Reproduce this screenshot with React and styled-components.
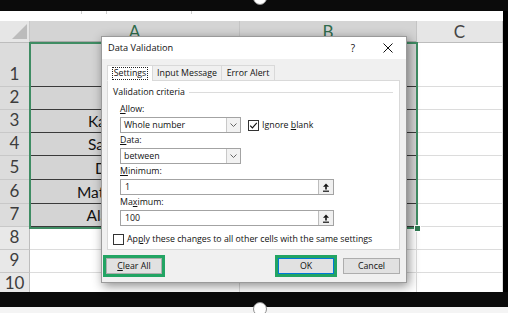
import React from "react";
import styled, { createGlobalStyle } from "styled-components";

const GlobalStyle = createGlobalStyle`
  html, body {
    margin: 0;
    padding: 0;
    background: #000;
  }
  body {
    width: 508px;
    height: 313px;
    overflow: hidden;
    font-family: "Open Sans", "Noto Sans", sans-serif;
  }
`;

const columns = [
  { key: "A", selected: true },
  { key: "B", selected: true },
  { key: "C", selected: false },
];

// row number, height, text in column A
const rows = [
  { n: 1, h: 44, text: "" },
  { n: 2, h: 23, text: "" },
  { n: 3, h: 23, text: "Kate Williams" },
  { n: 4, h: 23, text: "Sam Peterson" },
  { n: 5, h: 24, text: "Daniel Ross" },
  { n: 6, h: 24, text: "Matthew Hartley" },
  { n: 7, h: 23, text: "Alan Johnston" },
  { n: 8, h: 23, text: "" },
  { n: 9, h: 23, text: "" },
  { n: 10, h: 23, text: "" },
];

const Chevron = () => (
  <svg width="7" height="4" viewBox="0 0 7 4">
    <polyline points="0.5,0.5 3.5,3.5 6.5,0.5" fill="none" stroke="#666" strokeWidth="1" />
  </svg>
);

const RangeIcon = () => (
  <svg width="8" height="9" viewBox="0 0 8 9">
    <polygon points="4,0.5 1,3.8 7,3.8" fill="#111" />
    <rect x="3.2" y="3.5" width="1.6" height="3" fill="#111" />
    <rect x="1" y="7.6" width="6" height="1.2" fill="#111" />
  </svg>
);

const CloseIcon = () => (
  <svg width="10" height="10" viewBox="0 0 10 10">
    <path d="M0.5 0.5 L9.5 9.5 M9.5 0.5 L0.5 9.5" stroke="#111" strokeWidth="1" />
  </svg>
);

const Tick = () => (
  <svg width="9" height="9" viewBox="0 0 9 9">
    <polyline points="1.2,4.6 3.4,6.9 7.8,1.8" fill="none" stroke="#111" strokeWidth="1.1" />
  </svg>
);

const App = () => {
  return (
    <>
      <GlobalStyle />
      <Frame>
        <TopBar />
        <Sheet>
          <FormulaStrip>
            <StripMark $w={82} />
            <StripMark $w={25} />
            <StripMark $w={85} />
          </FormulaStrip>
          <Grid $rows={rows.map((r) => r.h + "px").join(" ")}>
            <Corner>
              <CornerTriangle />
            </Corner>
            {columns.map((c) => (
              <ColHead key={c.key} $selected={c.selected}>
                {c.key}
              </ColHead>
            ))}
            {rows.map((r) => (
              <React.Fragment key={r.n}>
                <RowHead $selected={r.n <= 7}>{r.n}</RowHead>
                <Cell $selected={r.n <= 7}>{r.text}</Cell>
                <Cell $selected={r.n <= 7} />
                <Cell />
              </React.Fragment>
            ))}
            <Selection />
            <FillHandle />
          </Grid>
        </Sheet>
        <BottomBar />
        <BottomStrip />
        <Handle $top={-9} />
        <Handle $top={302} />

        <Dialog>
          <TitleBar>
            <Title>Data Validation</Title>
            <TitleButtons>
              <TitleButton>?</TitleButton>
              <TitleButton>
                <CloseIcon />
              </TitleButton>
            </TitleButtons>
          </TitleBar>

          <Tabs>
            <Tab $w={46} $active>
              <FocusText>Settings</FocusText>
            </Tab>
            <Tab $w={70}>Input Message</Tab>
            <Tab $w={54}>Error Alert</Tab>
          </Tabs>

          <Panel>
            <Legend>
              <span>Validation criteria</span>
              <LegendLine />
            </Legend>

            <Fields>
              <Label>
                <u>A</u>llow:
              </Label>
              <FieldRow>
                <Select $w={121}>
                  <span>Whole number</span>
                  <DropButton>
                    <Chevron />
                  </DropButton>
                </Select>
                <CheckRow $ml={7}>
                  <CheckBox>
                    <Tick />
                  </CheckBox>
                  <span>
                    Ignore <u>b</u>lank
                  </span>
                </CheckRow>
              </FieldRow>

              <Label>
                <u>D</u>ata:
              </Label>
              <FieldRow>
                <Select $w={121}>
                  <span>between</span>
                  <DropButton>
                    <Chevron />
                  </DropButton>
                </Select>
              </FieldRow>

              <Label>
                <u>M</u>inimum:
              </Label>
              <FieldRow>
                <Input>
                  <span>1</span>
                  <RangeButton>
                    <RangeIcon />
                  </RangeButton>
                </Input>
              </FieldRow>

              <Label>
                Ma<u>x</u>imum:
              </Label>
              <FieldRow>
                <Input>
                  <span>100</span>
                  <RangeButton>
                    <RangeIcon />
                  </RangeButton>
                </Input>
              </FieldRow>
            </Fields>

            <ApplyRow>
              <CheckRow>
                <CheckBox />
                <span>
                  Ap<u>p</u>ly these changes to all other cells with the same settings
                </span>
              </CheckRow>
            </ApplyRow>
          </Panel>

          <ButtonBar>
            <Highlight>
              <Button $w={56}>
                <u>C</u>lear All
              </Button>
            </Highlight>
            <RightButtons>
              <Highlight>
                <Button $w={56} $default>
                  OK
                </Button>
              </Highlight>
              <Button $w={57}>Cancel</Button>
            </RightButtons>
          </ButtonBar>
        </Dialog>
      </Frame>
    </>
  );
};

const Frame = styled.div`
  position: relative;
  width: 508px;
  height: 313px;
  background: #000;
  display: flex;
  flex-direction: column;
  overflow: hidden;
  & > * {
    flex-shrink: 0;
  }
`;

const TopBar = styled.div`
  height: 11px;
  background: #0b0b0b;
`;

const BottomBar = styled.div`
  height: 15px;
  background: #0b0b0b;
`;

const BottomStrip = styled.div`
  height: 6px;
  background: #f4f4f4;
`;

const Handle = styled.div`
  position: absolute;
  left: 253px;
  top: ${(p) => p.$top}px;
  width: 12px;
  height: 12px;
  border-radius: 50%;
  background: #fff;
  border: 1.5px solid #8c8c8c;
`;

const Sheet = styled.div`
  width: 503px;
  height: 281px;
  background: #fff;
  display: flex;
  flex-direction: column;
  overflow: hidden;
  font-family: Lato, "Liberation Sans", sans-serif;
  & > * {
    flex-shrink: 0;
  }
`;

const FormulaStrip = styled.div`
  height: 10px;
  display: flex;
  align-items: flex-start;
  background: #fff;
`;

const StripMark = styled.div`
  width: ${(p) => p.$w}px;
  height: 3px;
  border-right: 1px solid #cfcfcf;
  box-sizing: border-box;
`;

const Grid = styled.div`
  position: relative;
  display: grid;
  grid-template-columns: 30px 210px 177px 86px;
  grid-template-rows: 22px ${(p) => p.$rows};
`;

const Corner = styled.div`
  position: relative;
  background: #e6e6e6;
  border-right: 1px solid #c8c8c8;
  border-bottom: 1px solid #bdbdbd;
`;

const CornerTriangle = styled.div`
  position: absolute;
  right: 2px;
  bottom: 3px;
  width: 15px;
  height: 15px;
  background: #bcbcbc;
  clip-path: polygon(100% 0, 100% 100%, 0 100%);
`;

const ColHead = styled.div`
  display: flex;
  align-items: center;
  justify-content: center;
  font-size: 17px;
  background: ${(p) => (p.$selected ? "#d4d4d4" : "#e6e6e6")};
  color: ${(p) => (p.$selected ? "#2f6b4c" : "#444")};
  border-right: 1px solid #c4c4c4;
  border-bottom: ${(p) => (p.$selected ? "2px solid #a9a9a9" : "1px solid #bdbdbd")};
  box-sizing: border-box;
`;

const RowHead = styled.div`
  display: flex;
  align-items: flex-end;
  justify-content: center;
  padding-bottom: 2px;
  box-sizing: border-box;
  font-size: 17px;
  color: #3d3d3d;
  background: ${(p) => (p.$selected ? "#dcdcdc" : "#e8e8e8")};
  border-right: 1px solid #bdbdbd;
  border-bottom: 1px solid #c8c8c8;
`;

const Cell = styled.div`
  display: flex;
  align-items: flex-end;
  justify-content: center;
  padding-bottom: 2px;
  box-sizing: border-box;
  font-size: 15.5px;
  color: #111;
  white-space: nowrap;
  overflow: hidden;
  background: ${(p) => (p.$selected ? "#d4d4d4" : "#fff")};
  border-right: 1px solid ${(p) => (p.$selected ? "#8c8c8c" : "#dcdcdc")};
  border-bottom: 1px solid ${(p) => (p.$selected ? "#3a3a3a" : "#dcdcdc")};
`;

const Selection = styled.div`
  position: absolute;
  left: 29px;
  top: 21px;
  width: 389px;
  height: 187px;
  border: 2px solid #3f8c63;
  box-sizing: border-box;
  pointer-events: none;
`;

const FillHandle = styled.div`
  position: absolute;
  left: 414px;
  top: 204px;
  width: 5px;
  height: 5px;
  background: #2f7a52;
  border: 1px solid #fff;
`;

/* dialog */

const Dialog = styled.div`
  position: absolute;
  left: 101px;
  top: 36px;
  width: 306px;
  height: 247px;
  box-sizing: border-box;
  background: #f0f0f0;
  border: 1px solid #9a9a9a;
  box-shadow: 2px 3px 10px rgba(0, 0, 0, 0.45);
  display: flex;
  flex-direction: column;
  font-family: "Open Sans", "Noto Sans", sans-serif;
  font-size: 8.8px;
  line-height: 1.2;
  color: #111;
  & > * {
    flex-shrink: 0;
  }
`;

const TitleBar = styled.div`
  height: 22px;
  display: flex;
  align-items: center;
  justify-content: space-between;
  padding-left: 6px;
  background: #fff;
`;

const Title = styled.div`
  font-size: 9.2px;
  color: #111;
`;

const TitleButtons = styled.div`
  display: flex;
  gap: 5px;
  padding-right: 3px;
`;

const TitleButton = styled.div`
  width: 30px;
  height: 20px;
  display: flex;
  align-items: center;
  justify-content: center;
  font-size: 10px;
`;

const Tabs = styled.div`
  display: flex;
  margin: 6px 0 0 6px;
  height: 16px;
  position: relative;
  z-index: 1;
`;

const Tab = styled.div`
  width: ${(p) => p.$w}px;
  box-sizing: border-box;
  display: flex;
  align-items: center;
  justify-content: center;
  border: 1px solid #d9d9d9;
  border-bottom: ${(p) => (p.$active ? "1px solid #fff" : "1px solid #d9d9d9")};
  margin-left: -1px;
  background: ${(p) => (p.$active ? "#fff" : "#f0f0f0")};
  white-space: nowrap;
`;

const FocusText = styled.span`
  border: 1px dotted #222;
  padding: 0 1px;
  line-height: 11px;
`;

const Panel = styled.div`
  margin: -1px 6px 0 5px;
  height: 170px;
  box-sizing: border-box;
  background: #fff;
  border: 1px solid #d9d9d9;
  padding: 5px 6px 0 5px;
  display: flex;
  flex-direction: column;
`;

const Legend = styled.div`
  display: flex;
  align-items: center;
  height: 12px;
  gap: 4px;
  white-space: nowrap;
`;

const LegendLine = styled.div`
  flex: 1;
  height: 1px;
  background: #dcdcdc;
`;

const Fields = styled.div`
  display: flex;
  flex-direction: column;
  padding-left: 7px;
  margin-top: 4px;
`;

const Label = styled.div`
  height: 15px;
  display: flex;
  align-items: center;
  white-space: nowrap;
`;

const FieldRow = styled.div`
  display: flex;
  align-items: center;
  height: 16px;
`;

const Select = styled.div`
  width: ${(p) => p.$w}px;
  height: 16px;
  box-sizing: border-box;
  border: 1px solid #a3a3a3;
  background: #fff;
  display: flex;
  align-items: center;
  justify-content: space-between;
  padding-left: 3px;
`;

const DropButton = styled.div`
  width: 13px;
  height: 100%;
  border-left: 1px solid #c9c9c9;
  background: #f2f2f2;
  display: flex;
  align-items: center;
  justify-content: center;
`;

const Input = styled(Select)`
  width: 214px;
  padding-left: 4px;
`;

const RangeButton = styled.div`
  width: 15px;
  height: 100%;
  box-sizing: border-box;
  border-left: 1px solid #bdbdbd;
  background: #f0f0f0;
  display: flex;
  align-items: center;
  justify-content: center;
`;

const CheckRow = styled.div`
  display: flex;
  align-items: center;
  gap: 3px;
  margin-left: ${(p) => p.$ml || 0}px;
  white-space: nowrap;
`;

const CheckBox = styled.div`
  width: 11px;
  height: 11px;
  box-sizing: border-box;
  border: 1px solid #333;
  background: #fff;
  display: flex;
  align-items: center;
  justify-content: center;
`;

const ApplyRow = styled.div`
  margin-top: 6px;
  height: 14px;
  display: flex;
  align-items: center;
`;

const ButtonBar = styled.div`
  display: flex;
  justify-content: space-between;
  align-items: center;
  margin: 5px 6px 0 1px;
`;

const RightButtons = styled.div`
  display: flex;
  align-items: center;
  gap: 6px;
`;

const Highlight = styled.div`
  border: 3px solid #22a463;
  display: flex;
`;

const Button = styled.div`
  width: ${(p) => p.$w}px;
  height: 16px;
  box-sizing: border-box;
  display: flex;
  align-items: center;
  justify-content: center;
  background: #e1e1e1;
  border: 1px solid ${(p) => (p.$default ? "#0078d7" : "#adadad")};
  white-space: nowrap;
`;

export default App;
